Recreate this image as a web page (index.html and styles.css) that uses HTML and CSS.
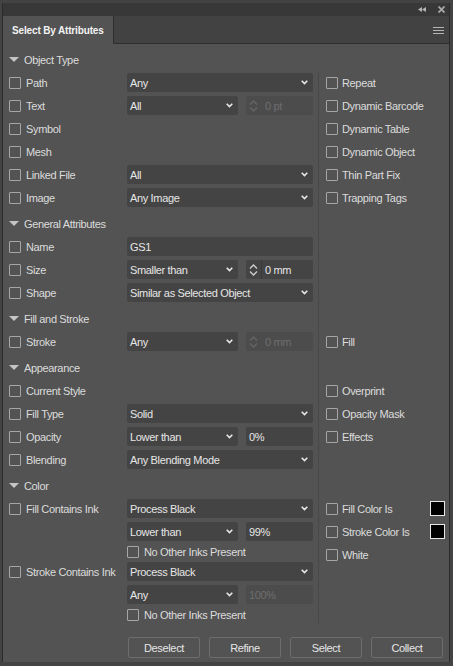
FILE: index.html
```html
<!DOCTYPE html>
<html>
<head>
<meta charset="utf-8">
<title>Select By Attributes</title>
<link rel="stylesheet" href="styles.css">
</head>
<body>
<div class="frame">
  <div class="titlebar">
    <svg class="ic-collapse" width="8" height="5" viewBox="0 0 8 5"><polygon points="0,2.5 4,0 4,5"/><polygon points="4,2.5 8,0 8,5"/></svg>
    <svg class="ic-close" width="7" height="7" viewBox="0 0 7 7"><path d="M0.5 0.5 L6.5 6.5 M6.5 0.5 L0.5 6.5"/></svg>
  </div>
  <div class="tabbar">
    <div class="tab">Select By Attributes</div>
    <svg class="ic-menu" width="11" height="7" viewBox="0 0 11 7"><rect x="0" y="0" width="11" height="1"/><rect x="0" y="3" width="11" height="1"/><rect x="0" y="6" width="11" height="1"/></svg>
  </div>
  <div class="panel">

    <section class="sec first">
      <div class="main">
        <div class="hdr"><span class="tri"></span>Object Type</div>
        <div class="row"><label class="cb"><span class="box"></span>Path</label><div class="sel full"><span>Any</span><svg class="chev" width="7" height="5" viewBox="0 0 7 5"><polyline points="0.7,0.8 3.5,3.6 6.3,0.8"/></svg></div></div>
        <div class="row"><label class="cb"><span class="box"></span>Text</label><div class="sel half"><span>All</span><svg class="chev" width="7" height="5" viewBox="0 0 7 5"><polyline points="0.7,0.8 3.5,3.6 6.3,0.8"/></svg></div><div class="fld dis"><span class="spin"><svg width="9" height="12" viewBox="0 0 9 12"><polyline points="1,4.5 4.5,1 8,4.5"/><polyline points="1,7.5 4.5,11 8,7.5"/></svg></span><span class="txt">0 pt</span></div></div>
        <div class="row"><label class="cb"><span class="box"></span>Symbol</label></div>
        <div class="row"><label class="cb"><span class="box"></span>Mesh</label></div>
        <div class="row"><label class="cb"><span class="box"></span>Linked File</label><div class="sel full"><span>All</span><svg class="chev" width="7" height="5" viewBox="0 0 7 5"><polyline points="0.7,0.8 3.5,3.6 6.3,0.8"/></svg></div></div>
        <div class="row"><label class="cb"><span class="box"></span>Image</label><div class="sel full"><span>Any Image</span><svg class="chev" width="7" height="5" viewBox="0 0 7 5"><polyline points="0.7,0.8 3.5,3.6 6.3,0.8"/></svg></div></div>
      </div>
      <div class="side">
        <div class="hdr-sp"></div>
        <div class="row"><label class="cb"><span class="box"></span>Repeat</label></div>
        <div class="row"><label class="cb"><span class="box"></span>Dynamic Barcode</label></div>
        <div class="row"><label class="cb"><span class="box"></span>Dynamic Table</label></div>
        <div class="row"><label class="cb"><span class="box"></span>Dynamic Object</label></div>
        <div class="row"><label class="cb"><span class="box"></span>Thin Part Fix</label></div>
        <div class="row"><label class="cb"><span class="box"></span>Trapping Tags</label></div>
      </div>
    </section>

    <section class="sec">
      <div class="main">
        <div class="hdr"><span class="tri"></span>General Attributes</div>
        <div class="row"><label class="cb"><span class="box"></span>Name</label><div class="inp full">GS1</div></div>
        <div class="row"><label class="cb"><span class="box"></span>Size</label><div class="sel half"><span>Smaller than</span><svg class="chev" width="7" height="5" viewBox="0 0 7 5"><polyline points="0.7,0.8 3.5,3.6 6.3,0.8"/></svg></div><div class="fld"><span class="spin"><svg width="9" height="12" viewBox="0 0 9 12"><polyline points="1,4.5 4.5,1 8,4.5"/><polyline points="1,7.5 4.5,11 8,7.5"/></svg></span><span class="txt">0 mm</span></div></div>
        <div class="row"><label class="cb"><span class="box"></span>Shape</label><div class="sel full"><span>Similar as Selected Object</span><svg class="chev" width="7" height="5" viewBox="0 0 7 5"><polyline points="0.7,0.8 3.5,3.6 6.3,0.8"/></svg></div></div>
      </div>
      <div class="side">
        <div class="hdr-sp"></div>
      </div>
    </section>

    <section class="sec">
      <div class="main">
        <div class="hdr"><span class="tri"></span>Fill and Stroke</div>
        <div class="row"><label class="cb"><span class="box"></span>Stroke</label><div class="sel half"><span>Any</span><svg class="chev" width="7" height="5" viewBox="0 0 7 5"><polyline points="0.7,0.8 3.5,3.6 6.3,0.8"/></svg></div><div class="fld dis"><span class="spin"><svg width="9" height="12" viewBox="0 0 9 12"><polyline points="1,4.5 4.5,1 8,4.5"/><polyline points="1,7.5 4.5,11 8,7.5"/></svg></span><span class="txt">0 mm</span></div></div>
      </div>
      <div class="side">
        <div class="hdr-sp"></div>
        <div class="row"><label class="cb"><span class="box"></span>Fill</label></div>
      </div>
    </section>

    <section class="sec">
      <div class="main">
        <div class="hdr"><span class="tri"></span>Appearance</div>
        <div class="row"><label class="cb"><span class="box"></span>Current Style</label></div>
        <div class="row"><label class="cb"><span class="box"></span>Fill Type</label><div class="sel full"><span>Solid</span><svg class="chev" width="7" height="5" viewBox="0 0 7 5"><polyline points="0.7,0.8 3.5,3.6 6.3,0.8"/></svg></div></div>
        <div class="row"><label class="cb"><span class="box"></span>Opacity</label><div class="sel half"><span>Lower than</span><svg class="chev" width="7" height="5" viewBox="0 0 7 5"><polyline points="0.7,0.8 3.5,3.6 6.3,0.8"/></svg></div><div class="fld"><span class="txt">0%</span></div></div>
        <div class="row"><label class="cb"><span class="box"></span>Blending</label><div class="sel full"><span>Any Blending Mode</span><svg class="chev" width="7" height="5" viewBox="0 0 7 5"><polyline points="0.7,0.8 3.5,3.6 6.3,0.8"/></svg></div></div>
      </div>
      <div class="side">
        <div class="hdr-sp"></div>
        <div class="row"><label class="cb"><span class="box"></span>Overprint</label></div>
        <div class="row"><label class="cb"><span class="box"></span>Opacity Mask</label></div>
        <div class="row"><label class="cb"><span class="box"></span>Effects</label></div>
      </div>
    </section>

    <section class="sec last">
      <div class="main">
        <div class="hdr"><span class="tri"></span>Color</div>
        <div class="row"><label class="cb"><span class="box"></span>Fill Contains Ink</label><div class="sel full"><span>Process Black</span><svg class="chev" width="7" height="5" viewBox="0 0 7 5"><polyline points="0.7,0.8 3.5,3.6 6.3,0.8"/></svg></div></div>
        <div class="row indent"><div class="sel half"><span>Lower than</span><svg class="chev" width="7" height="5" viewBox="0 0 7 5"><polyline points="0.7,0.8 3.5,3.6 6.3,0.8"/></svg></div><div class="fld"><span class="txt">99%</span></div></div>
        <div class="row indent short"><label class="cb"><span class="box"></span>No Other Inks Present</label></div>
        <div class="row"><label class="cb"><span class="box"></span>Stroke Contains Ink</label><div class="sel full"><span>Process Black</span><svg class="chev" width="7" height="5" viewBox="0 0 7 5"><polyline points="0.7,0.8 3.5,3.6 6.3,0.8"/></svg></div></div>
        <div class="row indent"><div class="sel half"><span>Any</span><svg class="chev" width="7" height="5" viewBox="0 0 7 5"><polyline points="0.7,0.8 3.5,3.6 6.3,0.8"/></svg></div><div class="fld dis"><span class="txt">100%</span></div></div>
        <div class="row indent short"><label class="cb"><span class="box"></span>No Other Inks Present</label></div>
      </div>
      <div class="side">
        <div class="hdr-sp"></div>
        <div class="row"><label class="cb"><span class="box"></span>Fill Color Is</label><span class="sw"></span></div>
        <div class="row"><label class="cb"><span class="box"></span>Stroke Color Is</label><span class="sw"></span></div>
        <div class="row"><label class="cb"><span class="box"></span>White</label></div>
      </div>
    </section>

    <div class="btns">
      <button class="btn">Deselect</button>
      <button class="btn">Refine</button>
      <button class="btn">Select</button>
      <button class="btn">Collect</button>
    </div>
  </div>
</div>
</body>
</html>
```

FILE: styles.css
```css
* { box-sizing: border-box; }

body {
  margin: 0;
  width: 453px;
  height: 666px;
  overflow: hidden;
  background: #434343;
  font-family: "Liberation Sans", Arial, sans-serif;
  font-size: 11px;
  letter-spacing: -0.35px;
  color: #dcdcdc;
}

.frame {
  margin: 3px 3px 0 2px;
  border-left: 1px solid #2b2b2b;
  border-right: 1px solid #2b2b2b;
}

.titlebar {
  height: 13px;
  background: #383838;
  display: flex;
  align-items: center;
  justify-content: flex-end;
  padding-right: 4px;
  gap: 12px;
}

.ic-collapse { fill: #b4b4b4; }
.ic-close { stroke: #a8a8a8; stroke-width: 1.8; fill: none; }

.tabbar {
  height: 28px;
  background: #424242;
  border-bottom: 1px solid #2f2f2f;
  display: flex;
  align-items: center;
}

.tab {
  align-self: stretch;
  margin-bottom: -1px;
  width: 111px;
  background: #535353;
  border-right: 1px solid #2f2f2f;
  padding-left: 9px;
  display: flex;
  align-items: center;
  font-weight: bold;
  font-size: 10px;
  letter-spacing: -0.15px;
  color: #f2f2f2;
  white-space: nowrap;
}

.ic-menu { fill: #b4b4b4; margin-left: auto; margin-right: 5px; margin-top: 1px; }

.panel {
  background: #535353;
  padding-top: 1px;
  padding-bottom: 4px;
}

.sec {
  display: grid;
  grid-template-columns: 315px 1fr;
}

.sec.last { padding-bottom: 3px; }

.main { padding-left: 6px; }

.side {
  border-left: 1px solid #484848;
  padding-left: 7px;
  padding-right: 4px;
}

.hdr {
  height: 26px;
  padding-top: 3px;
  display: flex;
  align-items: center;
  color: #dcdcdc;
  white-space: nowrap;
}

.hdr-sp { height: 26px; }
.first .hdr-sp { margin-left: -8px; background: #535353; }

.tri {
  width: 0;
  height: 0;
  border-left: 5px solid transparent;
  border-right: 5px solid transparent;
  border-top: 5px solid #c4c4c4;
  margin-right: 5px;
}

.row {
  height: 23px;
  display: flex;
  align-items: center;
}

.row.indent { padding-left: 118px; }
.row.short { height: 17px; }

.cb {
  display: flex;
  align-items: center;
  gap: 5px;
  width: 118px;
  flex: none;
  white-space: nowrap;
}

.side .cb { width: auto; gap: 4px; }
.row.short .cb { width: auto; }

.box {
  width: 12px;
  height: 12px;
  border: 1px solid #a6a6a6;
  border-radius: 1px;
  flex: none;
}

.sel, .inp, .fld {
  height: 19px;
  background: #444444;
  border-radius: 2px;
  display: flex;
  align-items: center;
  color: #e6e6e6;
  white-space: nowrap;
}

.sel {
  justify-content: space-between;
  padding: 0 5px 0 3px;
}

.inp { padding-left: 3px; }

.full { width: 186px; }
.half { width: 111px; }

.chev { fill: none; stroke: #e8e8e8; stroke-width: 1.6; }

.fld {
  width: 67px;
  margin-left: 8px;
}

.fld .spin {
  width: 16px;
  height: 100%;
  border-right: 1px solid #3a3a3a;
  display: flex;
  align-items: center;
  justify-content: center;
}

.fld .spin svg { fill: none; stroke: #cfcfcf; stroke-width: 1.3; }

.fld .txt { padding-left: 3px; }

.fld.dis { background: #4c4c4c; color: #6e6e6e; }
.fld.dis .spin { border-right-color: #4c4c4c; }
.fld.dis .spin svg { stroke: #666666; }

.sw {
  width: 15px;
  height: 15px;
  background: #000;
  border: 1px solid #e8e8e8;
  margin-left: auto;
}

.btns {
  display: flex;
  gap: 9px;
  padding-left: 125px;
  margin-top: 11px;
}

.btn {
  width: 72px;
  height: 21px;
  padding: 0;
  background: #535353;
  border: 1px solid #6d6d6d;
  border-radius: 2px;
  font-family: inherit;
  font-size: 11px;
  letter-spacing: -0.35px;
  color: #e6e6e6;
}
```
